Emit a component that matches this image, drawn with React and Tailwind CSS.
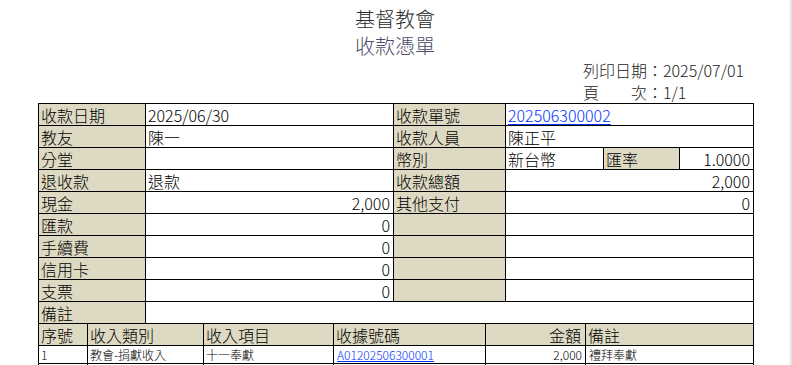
// 收款憑單 — printable receipt voucher
const FONT = { fontFamily: '"Noto Sans CJK TC", "Noto Sans", sans-serif' };

const LABEL = 'bg-[#ddd9c3] flex items-center pl-[2px] text-[16px] leading-[20px] font-light text-black';
const CELL = 'bg-white flex items-center px-[2px] text-[16px] leading-[20px] font-light text-black';
const NUM = 'bg-white flex items-center justify-end pr-[3px] text-[16px] leading-[20px] font-light text-black';
const SMALL = 'bg-white flex items-center text-[12px] leading-[16px] font-light text-black';

const AMOUNT_ROWS = [
  { label: '匯款', value: '0' },
  { label: '手續費', value: '0' },
  { label: '信用卡', value: '0' },
  { label: '支票', value: '0' },
];

const DETAIL_HEAD = ['序號', '收入類別', '收入項目', '收據號碼', '金額', '備註'];

export default function App() {
  return (
    <div className="w-[792px] h-[365px] overflow-hidden bg-white flex" style={FONT}>
      <div className="flex-1 flex flex-col">
        {/* Title */}
        <div className="pt-[5px] text-center text-[20px] leading-[27px] font-light">
          <div className="text-[#2a2a2a]">基督教會</div>
          <div className="text-[#4a4a68]">收款憑單</div>
        </div>

        <div className="ml-[38px] w-[716px] flex flex-col">
          {/* Print info */}
          <div className="flex justify-end">
            <div className="w-[171px] text-[16px] leading-[22px] font-light text-[#222]">
              <div>列印日期：2025/07/01</div>
              <div>頁　　次：1/1</div>
            </div>
          </div>

          {/* Receipt table */}
          <div className="bg-black p-[1px] flex flex-col gap-[1px]">
            <div className="grid grid-cols-[106px_247px_111px_247px] auto-rows-[21px] gap-[1px]">
              <div className={LABEL}>收款日期</div>
              <div className={CELL}>2025/06/30</div>
              <div className={LABEL}>收款單號</div>
              <div className={CELL}>
                <a href="#" className="text-[#0033ff] underline underline-offset-2">202506300002</a>
              </div>

              <div className={LABEL}>教友</div>
              <div className={CELL}>陳一</div>
              <div className={LABEL}>收款人員</div>
              <div className={CELL}>陳正平</div>

              <div className={LABEL}>分堂</div>
              <div className={CELL}></div>
              <div className={LABEL}>幣別</div>
              <div className="grid grid-cols-[97px_75px_73px] gap-[1px]">
                <div className={CELL}>新台幣</div>
                <div className={LABEL}>匯率</div>
                <div className={NUM}>1.0000</div>
              </div>

              <div className={LABEL}>退收款</div>
              <div className={CELL}>退款</div>
              <div className={LABEL}>收款總額</div>
              <div className={NUM}>2,000</div>

              <div className={LABEL}>現金</div>
              <div className={NUM}>2,000</div>
              <div className={LABEL}>其他支付</div>
              <div className={NUM}>0</div>

              {AMOUNT_ROWS.map((r) => (
                <div key={r.label} className="contents">
                  <div className={LABEL}>{r.label}</div>
                  <div className={NUM}>{r.value}</div>
                  <div className={LABEL}></div>
                  <div className={CELL}></div>
                </div>
              ))}

              <div className={LABEL}>備註</div>
              <div className={`${CELL} col-span-3`}></div>
            </div>

            {/* Detail lines */}
            <div className="grid grid-cols-[48px_115px_129px_151px_99px_167px] grid-rows-[21px_17px_18px] gap-[1px]">
              {DETAIL_HEAD.map((h, i) => (
                <div key={h + i} className={i === 4 ? `${LABEL} justify-end pr-[4px]` : LABEL}>
                  {h}
                </div>
              ))}

              <div className={`${SMALL} pl-[2px]`}>1</div>
              <div className={`${SMALL} pl-[2px]`}>教會-捐獻收入</div>
              <div className={`${SMALL} pl-[2px]`}>十一奉獻</div>
              <div className={`${SMALL} pl-[3px]`}>
                <a href="#" className="text-[#0033ff] underline">A01202506300001</a>
              </div>
              <div className={`${SMALL} justify-end pr-[3px]`}>2,000</div>
              <div className={`${SMALL} pl-[3px]`}>禮拜奉獻</div>

              {DETAIL_HEAD.map((h, i) => (
                <div key={'blank' + i} className="bg-white" />
              ))}
            </div>
          </div>
        </div>
      </div>

      {/* page edge */}
      <div className="w-[2px] bg-[#e6e6e6]" />
    </div>
  );
}
